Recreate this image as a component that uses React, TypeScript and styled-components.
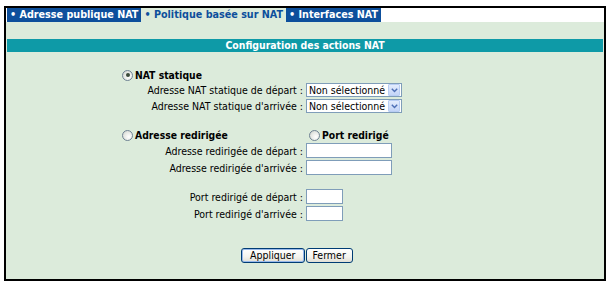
import styled, { createGlobalStyle } from 'styled-components';

const GlobalStyle = createGlobalStyle`
  html, body {
    margin: 0;
    padding: 0;
    background: #fff;
  }
  body {
    font-family: "DejaVu Sans Condensed", "Liberation Sans", sans-serif;
    font-size: 10.5px;
    color: #000;
  }
`;

const Frame = styled.div`
  margin: 6px 0 0 4px;
  width: 602px;
  height: 275px;
  box-sizing: border-box;
  border: 2px solid #000;
  background: #dcebdb;
  display: flex;
  flex-direction: column;
`;

const TabBar = styled.div`
  display: flex;
  height: 14px;
  background: #fff;
  padding-left: 1px;
`;

const Tab = styled.div<{ $active?: boolean }>`
  padding: 0 3px;
  line-height: 14px;
  font-size: 10.7px;
  font-weight: bold;
  white-space: nowrap;
  background: ${(p) => (p.$active ? '#dcebdb' : '#0d4f9c')};
  color: ${(p) => (p.$active ? '#0d4f9c' : '#fff')};
`;

const SectionTitle = styled.div`
  margin: 17px 1px 0;
  height: 13px;
  line-height: 13px;
  font-size: 10.4px;
  background: #0e9aa7;
  color: #fff;
  font-weight: bold;
  text-align: center;
`;

const Row = styled.div<{ $top: number; $height: number }>`
  display: grid;
  grid-template-columns: 1fr 1fr;
  column-gap: 2px;
  align-items: center;
  margin-top: ${(p) => p.$top}px;
  height: ${(p) => p.$height}px;
`;

const Label = styled.span`
  text-align: right;
  padding-right: 1px;
  white-space: nowrap;
`;

const Choice = styled.label<{ $indent: number }>`
  display: flex;
  align-items: center;
  gap: 2px;
  padding-left: ${(p) => p.$indent}px;
  font-size: 10.3px;
  font-weight: bold;
  white-space: nowrap;
`;

const RadioDot = styled.span<{ $checked?: boolean }>`
  position: relative;
  width: 9px;
  height: 9px;
  border-radius: 50%;
  border: 1px solid #6f8294;
  background: radial-gradient(circle at 65% 65%, #ffffff 0%, #e6e8e4 55%, #c9cdc6 100%);
  flex: none;

  &::after {
    content: '';
    display: ${(p) => (p.$checked ? 'block' : 'none')};
    position: absolute;
    left: 2.5px;
    top: 2.5px;
    width: 4px;
    height: 4px;
    border-radius: 50%;
    background: #3a4a3a;
  }
`;

const SelectBox = styled.div`
  display: flex;
  align-items: center;
  justify-content: space-between;
  box-sizing: border-box;
  width: 96px;
  height: 14px;
  padding: 0 1px 0 2px;
  border: 1px solid #7f9db9;
  background: #fff;
  white-space: nowrap;
  line-height: 12px;
`;

const DropButton = styled.span`
  display: flex;
  align-items: center;
  justify-content: center;
  width: 10px;
  height: 10px;
  border: 1px solid #b8cdf4;
  border-radius: 1px;
  background: linear-gradient(#e3ecfd, #c3d4f7);
`;

const TextBox = styled.div<{ $width: number }>`
  box-sizing: border-box;
  width: ${(p) => p.$width}px;
  height: 15px;
  border: 1px solid #7f9db9;
  background: #fff;
`;

const ButtonRow = styled.div`
  display: grid;
  grid-template-columns: 1fr 1fr;
  column-gap: 1px;
  margin-top: 27px;
`;

const Button = styled.button<{ $default?: boolean }>`
  justify-self: ${(p) => (p.$default ? 'end' : 'start')};
  height: 15px;
  padding: 0 ${(p) => (p.$default ? 8 : 6)}px;
  margin: 0;
  font: inherit;
  line-height: 11px;
  color: #000;
  border: 1px solid #003c74;
  border-radius: 3px;
  background: linear-gradient(#ffffff, #f4f3ee 60%, #e0ded5);
  box-shadow: ${(p) => (p.$default ? 'inset 0 0 0 1px #98b8ea' : 'none')};
`;

function Radio({ checked, label, indent }: { checked?: boolean; label: string; indent: number }) {
  return (
    <Choice $indent={indent}>
      <RadioDot $checked={checked} />
      {label}
    </Choice>
  );
}

function Select() {
  return (
    <SelectBox>
      <span>Non sélectionné</span>
      <DropButton>
        <svg width="7" height="5" viewBox="0 0 7 5">
          <path d="M0.8 0.8 L3.5 3.6 L6.2 0.8" fill="none" stroke="#4d6fb5" strokeWidth="1.4" />
        </svg>
      </DropButton>
    </SelectBox>
  );
}

export default function App() {
  return (
    <>
      <GlobalStyle />
      <Frame>
        <TabBar>
          <Tab>• Adresse publique NAT</Tab>
          <Tab $active>• Politique basée sur NAT</Tab>
          <Tab>• Interfaces NAT</Tab>
        </TabBar>
        <SectionTitle>Configuration des actions NAT</SectionTitle>

        <Row $top={17} $height={12}>
          <Radio checked label="NAT statique" indent={116} />
        </Row>
        <Row $top={2} $height={14}>
          <Label>Adresse NAT statique de départ :</Label>
          <Select />
        </Row>
        <Row $top={2} $height={14}>
          <Label>Adresse NAT statique d'arrivée :</Label>
          <Select />
        </Row>

        <Row $top={16} $height={12}>
          <Radio label="Adresse redirigée" indent={116} />
          <Radio label="Port redirigé" indent={3} />
        </Row>
        <Row $top={2} $height={15}>
          <Label>Adresse redirigée de départ :</Label>
          <TextBox $width={86} />
        </Row>
        <Row $top={2} $height={15}>
          <Label>Adresse redirigée d'arrivée :</Label>
          <TextBox $width={86} />
        </Row>

        <Row $top={14} $height={15}>
          <Label>Port redirigé de départ :</Label>
          <TextBox $width={37} />
        </Row>
        <Row $top={2} $height={15}>
          <Label>Port redirigé d'arrivée :</Label>
          <TextBox $width={37} />
        </Row>

        <ButtonRow>
          <Button $default>Appliquer</Button>
          <Button>Fermer</Button>
        </ButtonRow>
      </Frame>
    </>
  );
}
